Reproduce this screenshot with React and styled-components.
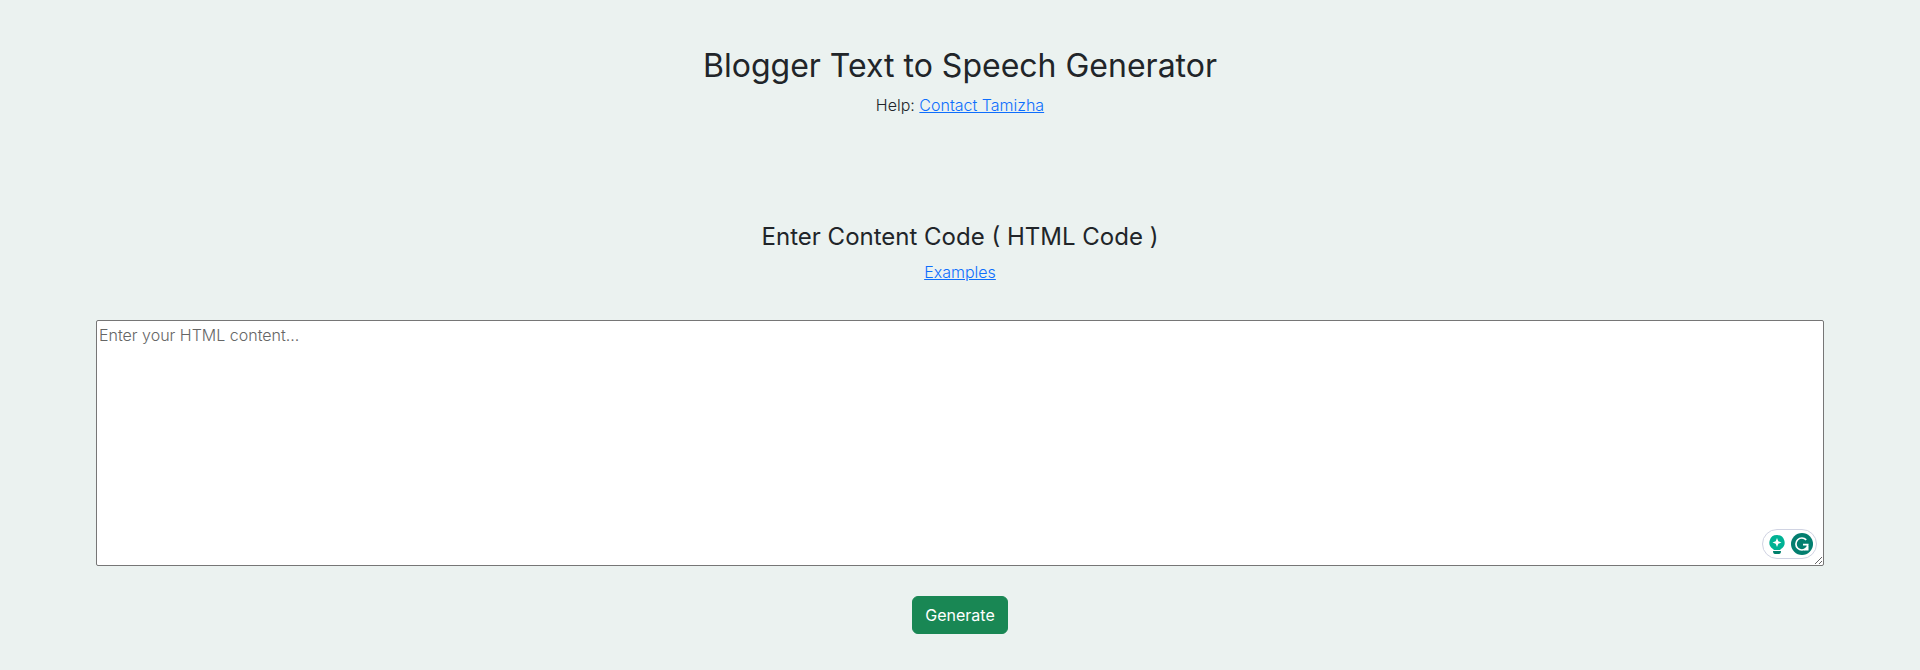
import React from 'react';
import styled, { createGlobalStyle } from 'styled-components';

const Global = createGlobalStyle`
  *, *::before, *::after { box-sizing: border-box; }
  body {
    margin: 0;
    background: #ebf2f0;
    color: #212529;
    font: 300 16px/24px Inter, sans-serif;
  }
`;
const Page = styled.main`
  display: flex;
  flex-direction: column;
  align-items: center;
  min-height: 100vh;
  padding: 47px 5% 36px;
`;
const Section = styled.section`
  display: flex;
  flex-direction: column;
  align-items: center;
  width: 100%;
  margin-bottom: ${(p) => p.$gap}px;
`;
const Title = styled.h1`
  margin: 0 0 8px;
  font-size: 32px;
  line-height: 38px;
  font-weight: 400;
`;
const Label = styled.label`
  margin-bottom: 8px;
  font-size: 24px;
  line-height: 30px;
  font-weight: 400;
`;
const Help = styled.p`
  margin: 0;
`;
const Link = styled.a`
  color: #0d6efd;
  text-decoration: underline;
`;
const Editor = styled.div`
  position: relative;
  width: 100%;
  margin-bottom: 30px;
`;
const CodeInput = styled.textarea`
  display: block;
  width: 100%;
  height: 246px;
  margin: 0;
  padding: 2px;
  border: 1px solid #767676;
  border-radius: 2px;
  background: #fff;
  font: inherit;
  resize: vertical;
  &::placeholder { color: #666; }
`;
const Assistant = styled.div`
  position: absolute;
  right: 7px;
  bottom: 7px;
  display: flex;
  align-items: center;
  gap: 6px;
  height: 30px;
  padding: 0 3px 0 6px;
  border: 1px solid #d0d3e2;
  border-radius: 15px;
  background: #fff;
`;
const GenerateButton = styled.button`
  padding: 6px 12px;
  border: 1px solid #198754;
  border-radius: 6px;
  background: #198754;
  color: #fff;
  font: 400 16px/24px Inter, sans-serif;
  cursor: pointer;
`;

export default function App() {
  return (
    <Page>
      <Global />
      <Section $gap={105}>
        <Title>Blogger Text to Speech Generator</Title>
        <Help>Help: <Link href="#contact">Contact Tamizha</Link></Help>
      </Section>
      <Section $gap={36}>
        <Label htmlFor="content">Enter Content Code ( HTML Code )</Label>
        <Link href="#examples">Examples</Link>
      </Section>
      <Editor>
        <CodeInput id="content" placeholder="Enter your HTML content..." />
        <Assistant>
          <svg width="16" height="20" viewBox="0 0 16 20" aria-hidden="true">
            <path d="M8 1a7.500 7.500 0 0 0-4 13.900L5 16h6l1-1.100A7.500 7.500 0 0 0 8 1Z" fill="#00b294" />
            <path d="m8 4 1.300 3.200L12.500 8.500 9.300 9.800 8 13 6.700 9.800 3.500 8.500l3.200-1.300Z" fill="#fff" />
            <path d="M4 17h8q0 3-2 3H6q-2 0-2-3Z" fill="#00806c" />
          </svg>
          <svg width="22" height="22" viewBox="0 0 22 22" aria-hidden="true">
            <circle cx="11" cy="11" r="11" fill="#027e6f" />
            <path d="M15.200 6.800A6 6 0 1 0 15.200 15.200Q16.500 14 16.700 11.700H12" fill="none" stroke="#fff" strokeWidth="1.700" />
            <path d="M17.500 12.500V17.500H12.800Z" fill="#fff" />
          </svg>
        </Assistant>
      </Editor>
      <GenerateButton type="button">Generate</GenerateButton>
    </Page>
  );
}
